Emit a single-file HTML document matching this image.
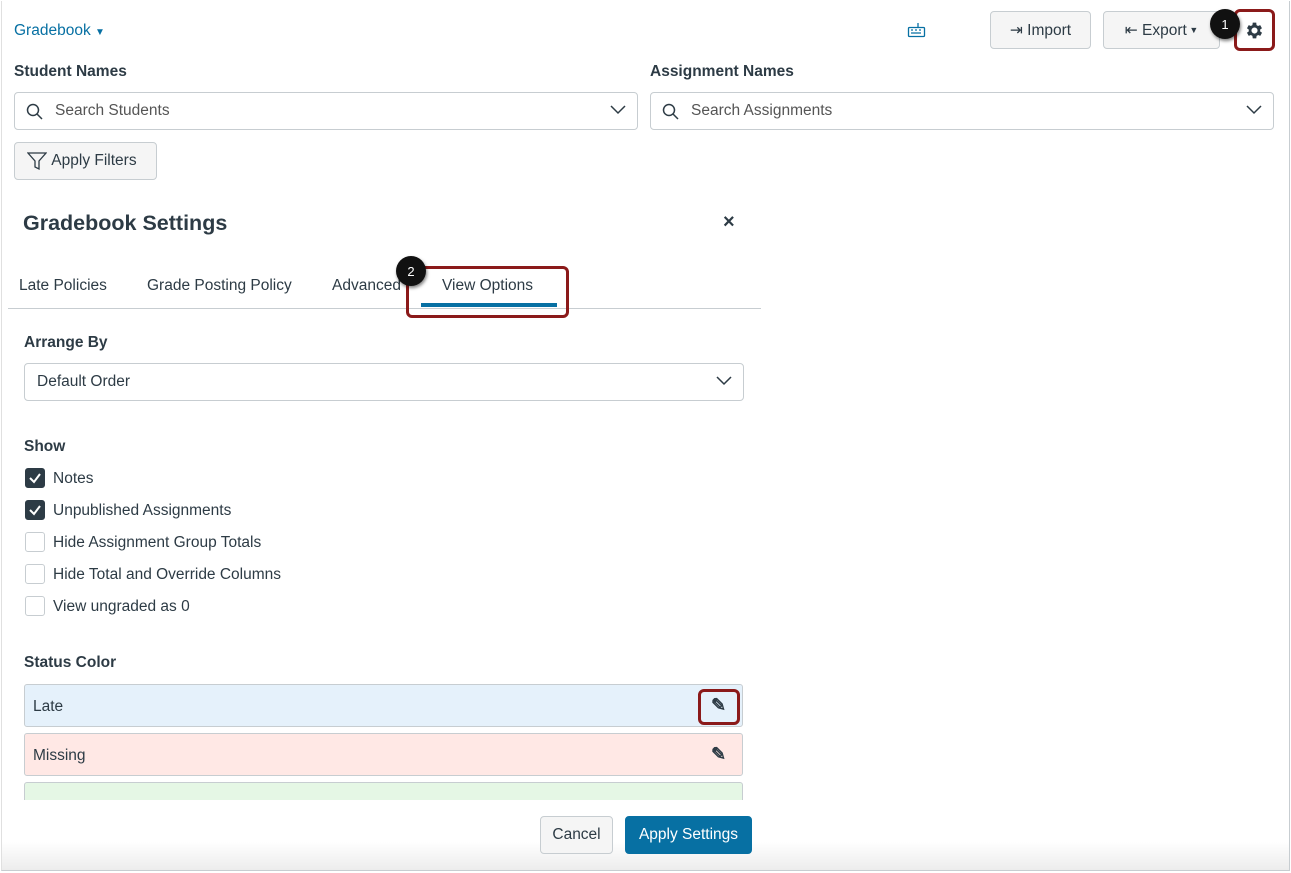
<!DOCTYPE html>
<html><head><style>
*{box-sizing:border-box}
body{margin:0;width:1291px;height:873px;background:#fff;font-family:"Liberation Sans",sans-serif;color:#2d3b45;position:relative;overflow:hidden}
.a{position:absolute}
.frame{left:1px;top:1px;width:1289px;height:870px;border:1px solid #c7cdd1;border-top:none;border-left:1px solid #e0e0e0}
.btn{background:#f5f5f5;border:1px solid #c7cdd1;border-radius:4px;font-size:15.5px;color:#2d3b45;display:flex;align-items:center;justify-content:center}
.input{border:1px solid #c7cdd1;border-radius:4px;height:38px;font-size:15.5px;color:#555;display:flex;align-items:center}
.lbl{font-size:15.5px;font-weight:bold}
.cb{width:20px;height:20px;border:1px solid #c7cdd1;border-radius:3px;background:#fff}
.cb.on{background:#2d3b45;border-color:#2d3b45}
.row{font-size:15.5px}
.status{left:24px;width:719px;height:43px;border:1px solid #c7cdd1;border-radius:3px;font-size:15.5px;padding:13px 8px}
.badge{width:30px;height:30px;border-radius:50%;background:#111;color:#fff;font-size:13px;display:flex;align-items:center;justify-content:center;box-shadow:1px 2px 3px rgba(0,0,0,.5)}
.red{border:3px solid #8b1a1a;border-radius:6px}
.pen{font-size:18px;color:#2d3b45;font-weight:bold}
</style></head><body>
<div class="a frame"></div>
<div class="a" style="left:14px;top:22px;font-size:15.5px;color:#0770a3">Gradebook <span style="font-size:10px">▼</span></div>
<svg class="a" style="left:907px;top:22px" width="20" height="16"><path d="M11 1v4" stroke="#0770a3" stroke-width="1.3"/><rect x="1.5" y="5.5" width="16" height="9" rx="1" fill="none" stroke="#0770a3" stroke-width="1.3"/><path d="M4 8h2M8 8h2M12 8h2M4 11h10" stroke="#0770a3" stroke-width="1.3"/></svg>
<div class="a btn" style="left:990px;top:11px;width:101px;height:38px">⇥&nbsp;Import</div>
<div class="a btn" style="left:1103px;top:11px;width:117px;height:38px">⇤&nbsp;Export <span style="font-size:9px">&nbsp;▼</span></div>
<div class="a red" style="left:1234px;top:9px;width:41px;height:42px"></div>
<svg class="a" style="left:1244px;top:20px" width="21" height="21" viewBox="0 0 24 24"><path fill="#2d3b45" d="M19.4 13a7.5 7.5 0 000-2l2.1-1.6-2-3.5-2.5 1a7.6 7.6 0 00-1.7-1L15 3h-4l-.4 2.9a7.6 7.6 0 00-1.7 1l-2.5-1-2 3.5L6.5 11a7.5 7.5 0 000 2l-2.1 1.6 2 3.5 2.5-1a7.6 7.6 0 001.7 1L11 21h4l.4-2.9a7.6 7.6 0 001.7-1l2.5 1 2-3.5zM13 15.5a3.5 3.5 0 110-7 3.5 3.5 0 010 7z" transform="translate(-1 0)"/></svg>
<div class="a badge" style="left:1210px;top:9px">1</div>
<div class="a lbl" style="left:14px;top:63px">Student Names</div>
<div class="a lbl" style="left:650px;top:63px">Assignment Names</div>
<div class="a input" style="left:14px;top:92px;width:624px;padding-left:40px">Search Students</div>
<div class="a input" style="left:650px;top:92px;width:624px;padding-left:40px">Search Assignments</div>
<svg class="a" style="left:26px;top:103px" width="18" height="18"><circle cx="7" cy="7" r="5.5" fill="none" stroke="#2d3b45" stroke-width="1.5"/><path d="M11 11l5 5" stroke="#2d3b45" stroke-width="1.5"/></svg>
<svg class="a" style="left:662px;top:103px" width="18" height="18"><circle cx="7" cy="7" r="5.5" fill="none" stroke="#2d3b45" stroke-width="1.5"/><path d="M11 11l5 5" stroke="#2d3b45" stroke-width="1.5"/></svg>
<svg class="a" style="left:610px;top:105px" width="16" height="10"><path d="M1 1l7 7 7-7" fill="none" stroke="#2d3b45" stroke-width="1.5"/></svg>
<svg class="a" style="left:1246px;top:105px" width="16" height="10"><path d="M1 1l7 7 7-7" fill="none" stroke="#2d3b45" stroke-width="1.5"/></svg>
<div class="a btn" style="left:14px;top:142px;width:143px;height:38px;justify-content:flex-start;padding-left:12px"><svg width="20" height="20"><path d="M1 2h18l-7 8v8l-4-2v-6z" fill="none" stroke="#2d3b45" stroke-width="1.3"/></svg>&nbsp;Apply Filters</div>
<div class="a" style="left:23px;top:211px;font-size:21.5px;font-weight:bold">Gradebook Settings</div>
<div class="a" style="left:723px;top:211px;font-size:20px;font-weight:bold">×</div>
<div class="a row" style="left:19px;top:277px">Late Policies</div>
<div class="a row" style="left:147px;top:277px">Grade Posting Policy</div>
<div class="a row" style="left:332px;top:277px">Advanced</div>
<div class="a row" style="left:442px;top:277px">View Options</div>
<div class="a" style="left:8px;top:308px;width:753px;height:1px;background:#c7cdd1"></div>
<div class="a" style="left:421px;top:303px;width:136px;height:4px;background:#0770a3"></div>
<div class="a red" style="left:406px;top:266px;width:163px;height:52px"></div>
<div class="a badge" style="left:396px;top:256px">2</div>
<div class="a lbl" style="left:24px;top:334px">Arrange By</div>
<div class="a input" style="left:24px;top:363px;width:720px;padding-left:12px;color:#2d3b45">Default Order</div>
<svg class="a" style="left:716px;top:376px" width="16" height="10"><path d="M1 1l7 7 7-7" fill="none" stroke="#2d3b45" stroke-width="1.5"/></svg>
<div class="a lbl" style="left:24px;top:438px">Show</div>
<div class="a cb on" style="left:25px;top:468px"><svg width="18" height="18"><path d="M4 9l4 4 6-8" fill="none" stroke="#fff" stroke-width="2"/></svg></div>
<div class="a row" style="left:53px;top:470px">Notes</div>
<div class="a cb on" style="left:25px;top:500px"><svg width="18" height="18"><path d="M4 9l4 4 6-8" fill="none" stroke="#fff" stroke-width="2"/></svg></div>
<div class="a row" style="left:53px;top:502px">Unpublished Assignments</div>
<div class="a cb" style="left:25px;top:532px"></div>
<div class="a row" style="left:53px;top:534px">Hide Assignment Group Totals</div>
<div class="a cb" style="left:25px;top:564px"></div>
<div class="a row" style="left:53px;top:566px">Hide Total and Override Columns</div>
<div class="a cb" style="left:25px;top:596px"></div>
<div class="a row" style="left:53px;top:598px">View ungraded as 0</div>
<div class="a lbl" style="left:24px;top:654px">Status Color</div>
<div class="a status" style="top:684px;background:#e5f1fb">Late</div>
<div class="a status" style="top:733px;background:#ffe8e5">Missing</div>
<div class="a status" style="top:782px;background:#e5f7e5;height:18px;overflow:hidden"></div>
<div class="a pen" style="left:711px;top:695px">✎</div>
<div class="a pen" style="left:711px;top:744px">✎</div>
<div class="a red" style="left:698px;top:689px;width:42px;height:36px"></div>
<div class="a" style="left:2px;top:800px;width:1287px;height:70px;background:linear-gradient(#fff 0%,#fff 60%,#ececec 100%)"></div>
<div class="a btn" style="left:540px;top:816px;width:73px;height:38px">Cancel</div>
<div class="a btn" style="left:625px;top:816px;width:127px;height:38px;background:#0770a3;border-color:#0770a3;color:#fff">Apply Settings</div>
</body></html>
